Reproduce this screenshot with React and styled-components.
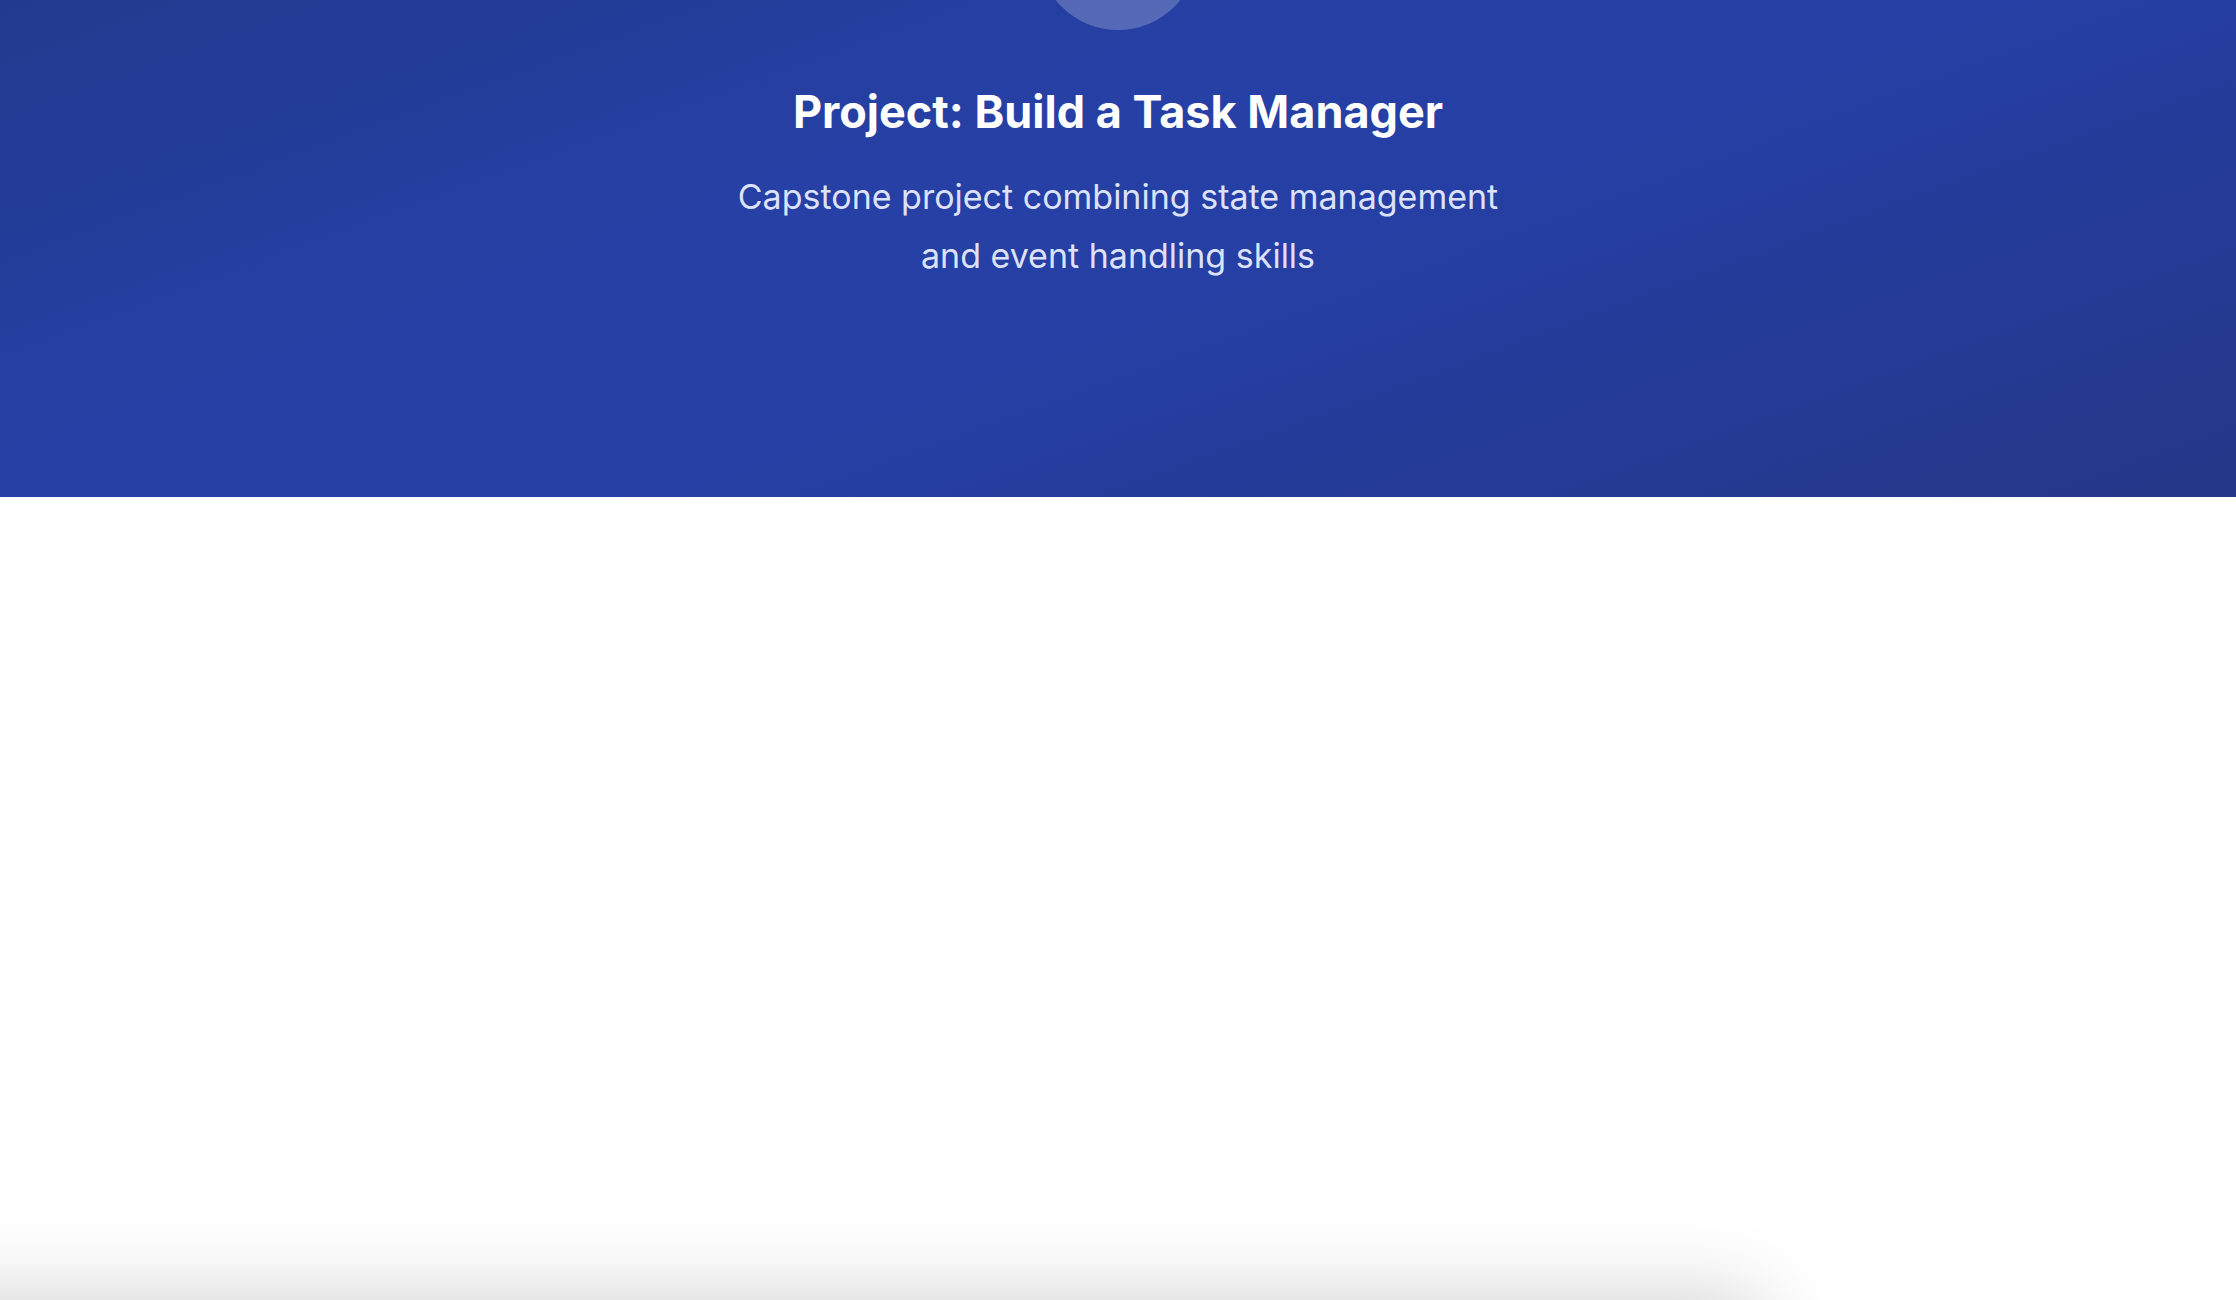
import React from "react";
import styled, { createGlobalStyle } from "styled-components";

const GlobalStyle = createGlobalStyle`
  html, body {
    margin: 0;
    padding: 0;
    background: #ffffff;
  }
  body {
    font-family: Inter, "Noto Sans", "Liberation Sans", sans-serif;
    -webkit-font-smoothing: antialiased;
  }
`;

const Page = styled.div`
  height: 100vh;
  overflow: hidden;
  display: flex;
  flex-direction: column;
  background: #ffffff;
`;

const Hero = styled.header`
  flex: 0 0 497px;
  display: flex;
  flex-direction: column;
  align-items: center;
  overflow: hidden;
  background: linear-gradient(
    160deg,
    #233b8f 0%,
    #2640a6 38%,
    #263fa4 55%,
    #243788 100%
  );
  color: #ffffff;
  text-align: center;
`;

const IconBubble = styled.div`
  width: 160px;
  height: 160px;
  margin-top: -130px;
  border-radius: 50%;
  background: rgba(255, 255, 255, 0.22);
  flex-shrink: 0;
`;

const Title = styled.h1`
  margin: 54px 0 0;
  font-size: 45px;
  font-weight: 700;
  line-height: 1.25;
  letter-spacing: 0;
`;

const Subtitle = styled.p`
  margin: 27px 0 0;
  max-width: 800px;
  font-size: 34px;
  font-weight: 400;
  line-height: 59px;
  color: rgba(233, 237, 255, 0.95);
`;

const Content = styled.main`
  flex: 1;
  display: grid;
  grid-template-columns: 1760px 1fr;
  align-content: start;
  padding-top: 803px;
`;

const Card = styled.section`
  height: 420px;
  margin-left: -120px;
  background: #ffffff;
  box-shadow: 0 0 80px rgba(0, 0, 0, 0.2);
`;

export default function App() {
  return (
    <Page>
      <GlobalStyle />
      <Hero>
        <IconBubble />
        <Title>Project: Build a Task Manager</Title>
        <Subtitle>
          Capstone project combining state management and event handling skills
        </Subtitle>
      </Hero>
      <Content>
        <Card />
      </Content>
    </Page>
  );
}
